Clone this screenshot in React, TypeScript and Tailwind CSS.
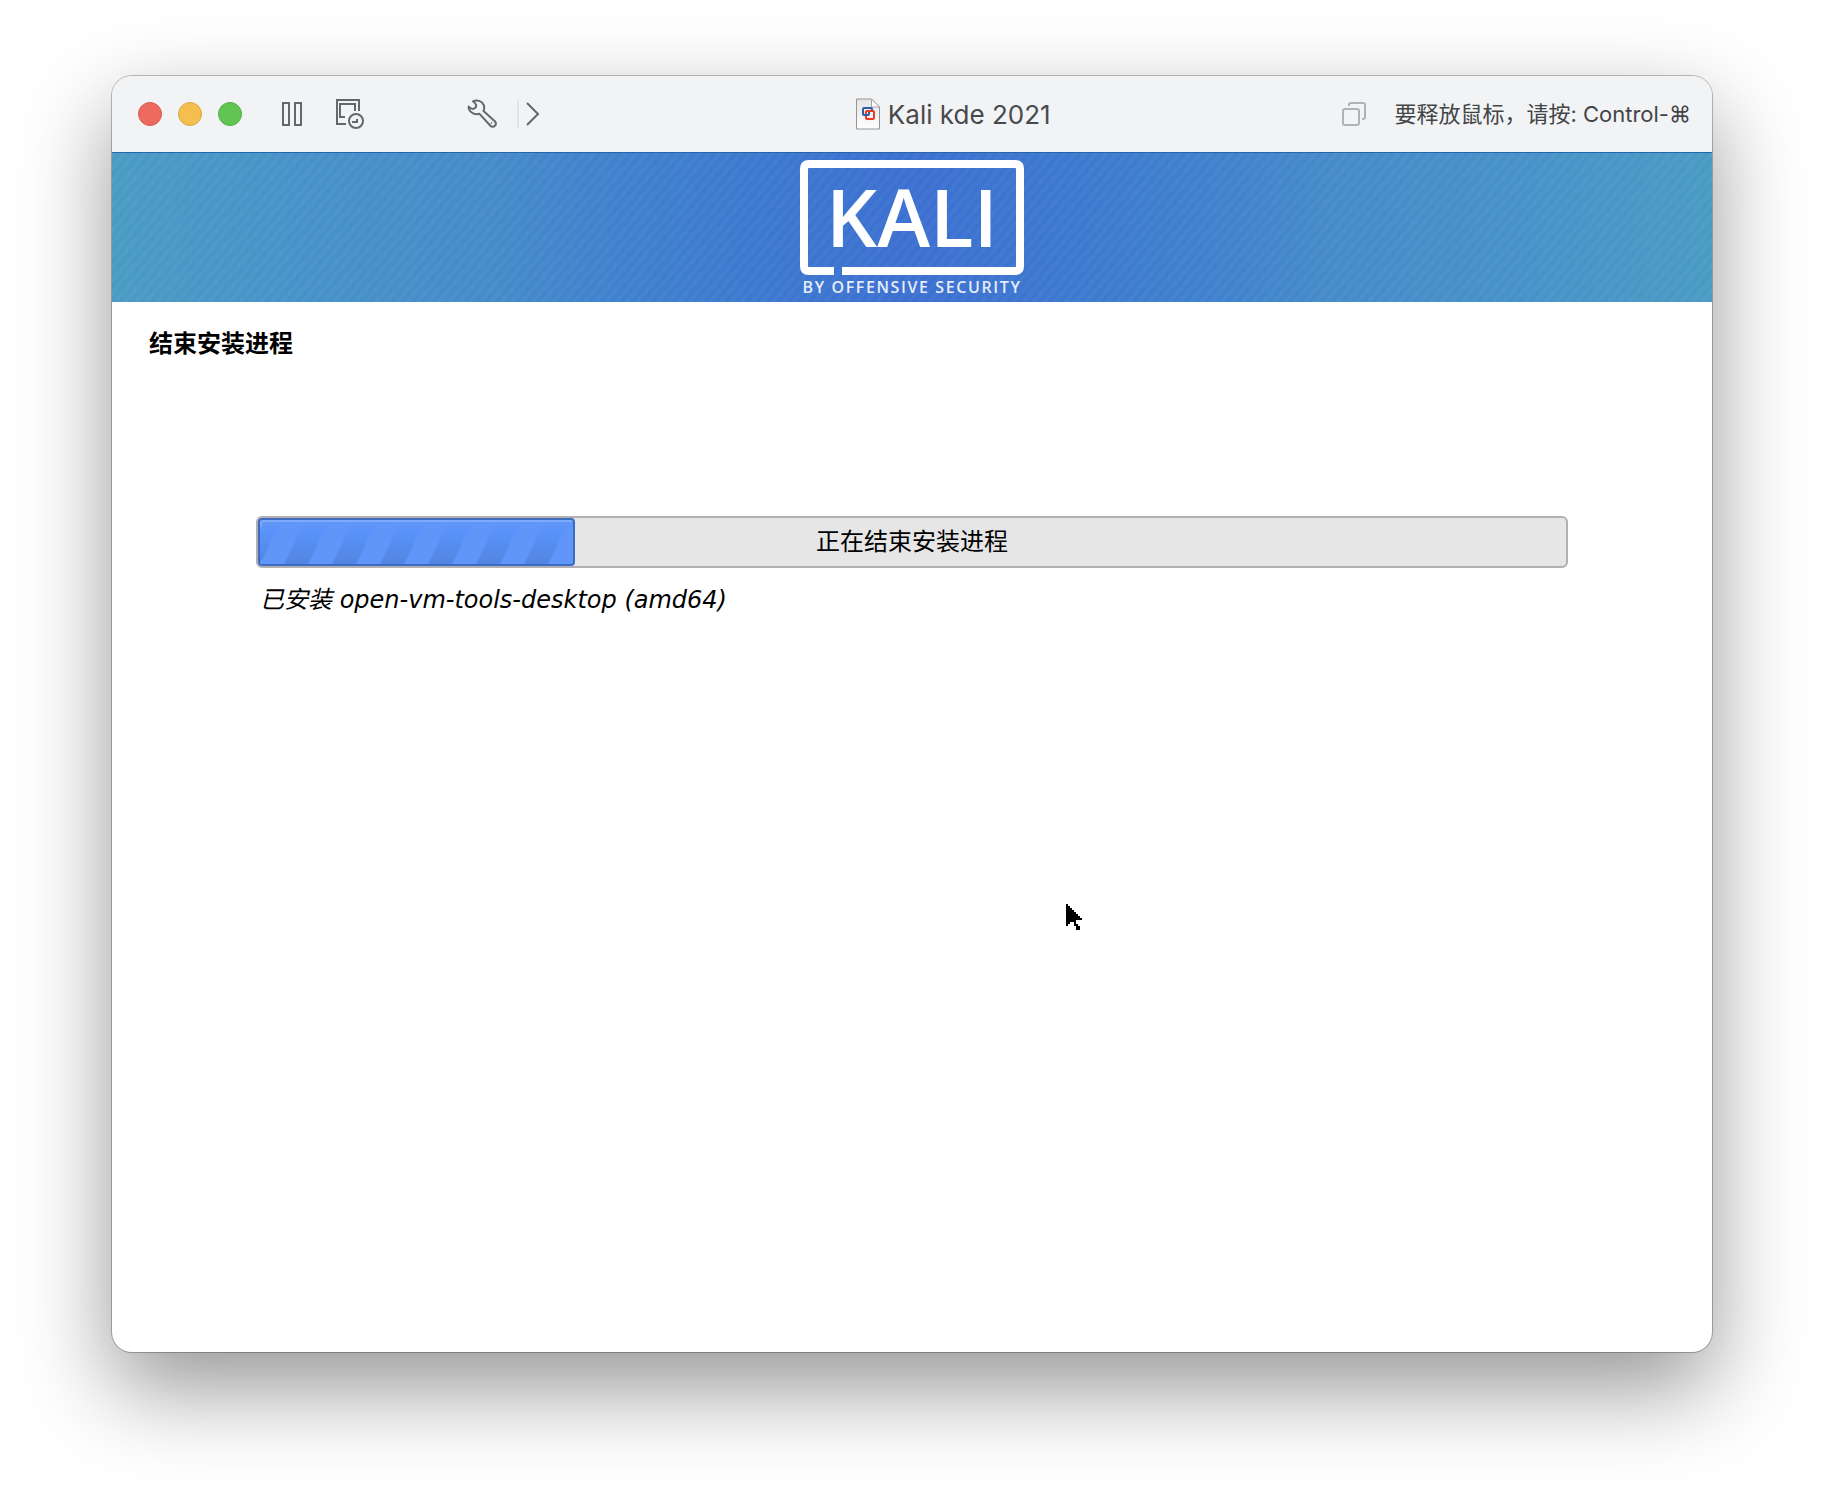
import React from 'react';

interface TrafficLightProps {
  label: string;
  className: string;
}

const TrafficLight: React.FC<TrafficLightProps> = ({ label, className }) => (
  <button type="button" aria-label={label} className={`w-6 h-6 rounded-full border ${className}`} />
);

const SnapshotIcon = () => (
  <svg className="w-[30px] h-[30px]" viewBox="0 0 30 30" fill="none" stroke="currentColor" strokeWidth="2">
    <path d="M12 25H3V1h22v11" />
    <path d="M11 18H6V5h15v7" />
    <circle cx="22" cy="22" r="7" />
    <path d="M18 23h5v-3" />
  </svg>
);

const WrenchIcon = () => (
  <svg className="w-[30px] h-[30px]" viewBox="0 0 30 30" fill="none" stroke="currentColor" strokeWidth="2" strokeLinejoin="round">
    <path d="M6 2.300C10 .3 15 2 16.700 6c.8 2 .6 4-.2 6l11.300 10.300c1.300 1.400 1.300 3.200.1 4.500s-3.300 1.300-4.500 0L12.500 14.800C8 16 3.500 14 2 10.300c-.3-.9-.4-1.800-.3-2.700 1.800 1.800 3.600 2.800 5.200 2.100 1.800-.8 2.800-2.400 2-4.200C8.400 4.100 7.200 3.200 6 2.300z" />
    <circle cx="24.500" cy="24" r="0.500" strokeWidth="1" />
  </svg>
);

const DocumentIcon = () => (
  <svg className="w-6 h-8" viewBox="0 0 24 32">
    <defs>
      <linearGradient id="paper" x1="0" y1="0" x2="0" y2="1">
        <stop offset="0" stopColor="#e4e4e4" />
        <stop offset="1" stopColor="#fff" />
      </linearGradient>
    </defs>
    <path d="M.500 1h15l8 8v22H.500z" fill="url(#paper)" stroke="#949494" />
    <path d="M15.500 1v8h8z" fill="#fff" stroke="#a3a3a3" />
    <g fill="none" strokeWidth="2">
      <path d="M10 17H8q-1 0-1-1v-5q0-1 1-1h7q1 0 1 1v2" stroke="#2d5fa8" />
      <rect x="10" y="13" width="8" height="8" rx="1" stroke="#ec3b24" />
      <path d="M9 17h3q1 0 1-1v-2" stroke="#2d5fa8" />
    </g>
  </svg>
);

const WindowsIcon = () => (
  <svg className="w-6 h-6" viewBox="0 0 24 24" fill="none" stroke="currentColor" strokeWidth="2">
    <rect x="1" y="7" width="16" height="16" rx="2" />
    <path d="M7 4V3q0-2 2-2h12q2 0 2 2v12q0 2-2 2h-1" />
  </svg>
);

const KaliLogo = () => (
  <svg className="w-56 h-[142px]" viewBox="0 0 224 142" role="img" aria-label="Kali by Offensive Security">
    <path
      d="M34 111H9q-5 0-5-5V9q0-5 5-5h206q5 0 5 5v97q0 5-5 5H42"
      fill="none"
      stroke="#fff"
      strokeWidth="8"
    />
    <text x="112" y="87" textAnchor="middle" fill="#fff" className="font-['Open_Sans'] font-semibold text-[80px]">
      KALI
    </text>
    <text x="112" y="133" textAnchor="middle" fill="#e4ecfa" className="font-['Open_Sans'] font-semibold text-base tracking-widest">
      BY OFFENSIVE SECURITY
    </text>
  </svg>
);

const ProgressStripes = () => (
  <svg className="w-full h-full" aria-hidden="true">
    <defs>
      <linearGradient id="stripeShade" x1="0" y1="0" x2="0" y2="1">
        <stop offset="0.1" stopColor="#5590fa" stopOpacity="0" />
        <stop offset="0.25" stopColor="#5a93fb" />
        <stop offset="1" stopColor="#5285e0" />
      </linearGradient>
      <pattern id="stripes" width="48" height="44" patternUnits="userSpaceOnUse">
        <path d="M24 44h24L70 0H46z" fill="url(#stripeShade)" />
        <path d="M-24 44H0L22 0H-2z" fill="url(#stripeShade)" />
      </pattern>
    </defs>
    <rect width="100%" height="100%" fill="url(#stripes)" />
  </svg>
);

const MousePointer = () => (
  <svg className="absolute left-[954px] top-[602px] w-4 h-7" viewBox="0 0 8 14" shapeRendering="crispEdges" aria-hidden="true">
    <path d="M0 0h1v1h1v1h1v1h1v1h1v1h1v1h1v1h1v1H5v2h1v1h1v2H5v-2H4v-2H3V9H2v1H1v1H0z" />
  </svg>
);

const TitleBar = () => (
  <header className="h-[76px] shrink-0 flex items-center justify-between pl-[26px] pr-[21px] bg-[#f1f3f5] text-[#65676a]">
    <div className="flex items-center pr-6">
      <div className="flex items-center gap-4">
        <TrafficLight label="关闭" className="bg-[#ec6a5e] border-[#d95a50]" />
        <TrafficLight label="最小化" className="bg-[#f5bf4f] border-[#dba744]" />
        <TrafficLight label="缩放" className="bg-[#61c554] border-[#54b048]" />
      </div>
      <button type="button" aria-label="暂停" className="ml-10">
        <svg className="w-5 h-6" viewBox="0 0 20 24" fill="none" stroke="currentColor" strokeWidth="2">
          <rect x="1" y="1" width="6" height="22" />
          <rect x="13" y="1" width="6" height="22" />
        </svg>
      </button>
      <button type="button" aria-label="快照" className="ml-8">
        <SnapshotIcon />
      </button>
      <button type="button" aria-label="设置" className="ml-[103px]">
        <WrenchIcon />
      </button>
      <div className="ml-5 w-0.5 h-7 bg-[#e2e4e6]" />
      <button type="button" aria-label="更多" className="ml-[7px]">
        <svg className="w-[14px] h-6" viewBox="0 0 14 24" fill="none" stroke="currentColor" strokeWidth="2">
          <path d="M1 1l11 11L1 23" />
        </svg>
      </button>
    </div>

    <h1 className="flex items-center gap-2 text-[26px] text-[#48494b]">
      <DocumentIcon />
      Kali kde 2021
    </h1>

    <div className="flex items-center gap-7">
      <button type="button" aria-label="窗口" className="text-[#b0b2b4]">
        <WindowsIcon />
      </button>
      <span className="text-[22px] text-[#444547]">要释放鼠标，请按: Control-⌘</span>
    </div>
  </header>
);

const App: React.FC = () => {
  const progress = 24.2;

  return (
    <div className="min-h-screen flex flex-col px-28 pt-[76px] pb-[148px] bg-white font-[Inter,'Noto_Sans_CJK_SC',sans-serif]">
      <div className="flex-1 flex flex-col rounded-[20px] overflow-hidden bg-white shadow-[0_0_0_1px_rgba(0,0,0,0.25),0_36px_90px_rgba(0,0,0,0.42)]">
        <TitleBar />

        {/* Installer banner */}
        <div className="h-[150px] shrink-0 flex justify-center pt-[7px] border-t border-[#2565ac] bg-[repeating-linear-gradient(130deg,rgba(255,255,255,0.03)_0px,rgba(255,255,255,0.03)_4px,transparent_4px,transparent_8px),linear-gradient(90deg,#4a9bc4,#4792c9_12%,#458bc9_24%,#4083cd_30%,#3d79cf_40%,#3c70d1_50%,#3d79cf_60%,#4083cd_70%,#458bc9_76%,#4792c9_88%,#4a9bc4)]">
          <KaliLogo />
        </div>

        <main className="relative flex-1 font-['DejaVu_Sans','Noto_Sans_CJK_SC',sans-serif] text-black">
          <h2 className="pl-[37px] pt-6 text-2xl leading-9 font-bold">结束安装进程</h2>

          <div className="mx-36 mt-[154px]">
            <div
              role="progressbar"
              aria-labelledby="step"
              aria-valuenow={progress}
              aria-valuemin={0}
              aria-valuemax={100}
              className="relative h-[52px] rounded-md border-2 border-[#b2b0b2] bg-[#e6e6e6]"
            >
              <div
                className="h-full rounded-sm border-2 border-[#3d6bc2] bg-[#6096f8] shadow-[inset_2px_2px_0_0_#7eaafc] overflow-hidden"
                style={{ width: `${progress}%` }}
              >
                <ProgressStripes />
              </div>
              <span id="step" className="absolute inset-0 flex items-center justify-center text-2xl">
                正在结束安装进程
              </span>
            </div>
            <p className="mt-3 pl-1 text-2xl leading-10 italic">已安装 open-vm-tools-desktop (amd64)</p>
          </div>

          <MousePointer />
        </main>
      </div>
    </div>
  );
};

export default App;
